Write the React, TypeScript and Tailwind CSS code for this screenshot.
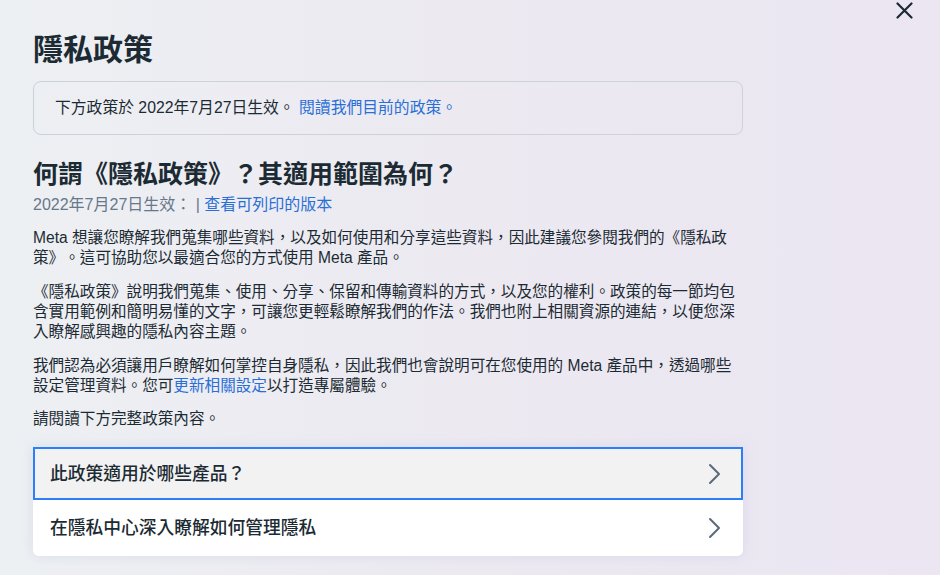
import React from 'react';

const font = { fontFamily: '"Liberation Sans", "Noto Sans CJK TC", sans-serif' };

const Chevron: React.FC = () => (
  <svg width="14" height="22" viewBox="0 0 14 22" fill="none" className="shrink-0">
    <polyline points="2,2 11,11 2,20" stroke="#5b6a79" strokeWidth="2" strokeLinecap="round" strokeLinejoin="round" />
  </svg>
);

const App: React.FC = () => {
  return (
    <div
      className="relative h-[575px] w-full overflow-hidden bg-gradient-to-r from-[#edf0f3] via-[#ece9f1] to-[#ebe6f2] text-[#1c2b33] [text-spacing-trim:space-all]"
      style={font}
    >
      {/* close button */}
      <button className="absolute right-[26px] top-[1px] p-[1px]" aria-label="關閉">
        <svg width="17" height="17" viewBox="0 0 17 17">
          <path d="M1.5 1.5 L15.5 15.5 M15.5 1.5 L1.5 15.5" stroke="#1c2b33" strokeWidth="2.2" strokeLinecap="round" />
        </svg>
      </button>

      <div className="ml-[33px] w-[710px] pt-[32px]">
        <h1 className="text-[30px] font-bold leading-[36px]">隱私政策</h1>

        <div className="mt-[13px] flex h-[54px] items-center rounded-[8px] border border-[#ccd2d9] px-[21px] text-[15.8px] leading-[20px]">
          <span>
            下方政策於 2022年7月27日生效。 <a className="text-[#2a6fd6]">閱讀我們目前的政策。</a>
          </span>
        </div>

        <h2 className="mt-[23px] text-[25px] font-bold leading-[32px]">何謂《隱私政策》？其適用範圍為何？</h2>
        <p className="mt-[5px] text-[16px] leading-[20px] text-[#67788a]">
          2022年7月27日生效： | <a className="text-[#2a6fd6]">查看可列印的版本</a>
        </p>

        <div className="whitespace-nowrap text-[15.6px] leading-[20px]">
          <p className="mt-[13px]">
            Meta 想讓您瞭解我們蒐集哪些資料，以及如何使用和分享這些資料，因此建議您參閱我們的《隱私政
            <br />
            策》。這可協助您以最適合您的方式使用 Meta 產品。
          </p>
          <p className="mt-[14px]">
            《隱私政策》說明我們蒐集、使用、分享、保留和傳輸資料的方式，以及您的權利。政策的每一節均包
            <br />
            含實用範例和簡明易懂的文字，可讓您更輕鬆瞭解我們的作法。我們也附上相關資源的連結，以便您深
            <br />
            入瞭解感興趣的隱私內容主題。
          </p>
          <p className="mt-[14px]">
            我們認為必須讓用戶瞭解如何掌控自身隱私，因此我們也會說明可在您使用的 Meta 產品中，透過哪些
            <br />
            設定管理資料。您可<a className="text-[#2a6fd6]">更新相關設定</a>以打造專屬體驗。
          </p>
          <p className="mt-[13px]">請閱讀下方完整政策內容。</p>
        </div>

        <div className="mt-[18px] rounded-b-[6px] bg-white shadow-[0_0_12px_rgba(180,185,220,0.35)]">
          <button className="flex h-[53px] w-full items-center justify-between border-2 border-[#2d7ff9] bg-[#f2f2f2] pl-[15px] pr-[19px] text-left">
            <span className="text-[17.75px] font-medium leading-[22px]">此政策適用於哪些產品？</span>
            <Chevron />
          </button>
          <button className="flex h-[56px] w-full items-center justify-between pl-[17px] pr-[21px] text-left">
            <span className="text-[17.75px] font-medium leading-[22px]">在隱私中心深入瞭解如何管理隱私</span>
            <Chevron />
          </button>
        </div>
      </div>
    </div>
  );
};

export default App;
